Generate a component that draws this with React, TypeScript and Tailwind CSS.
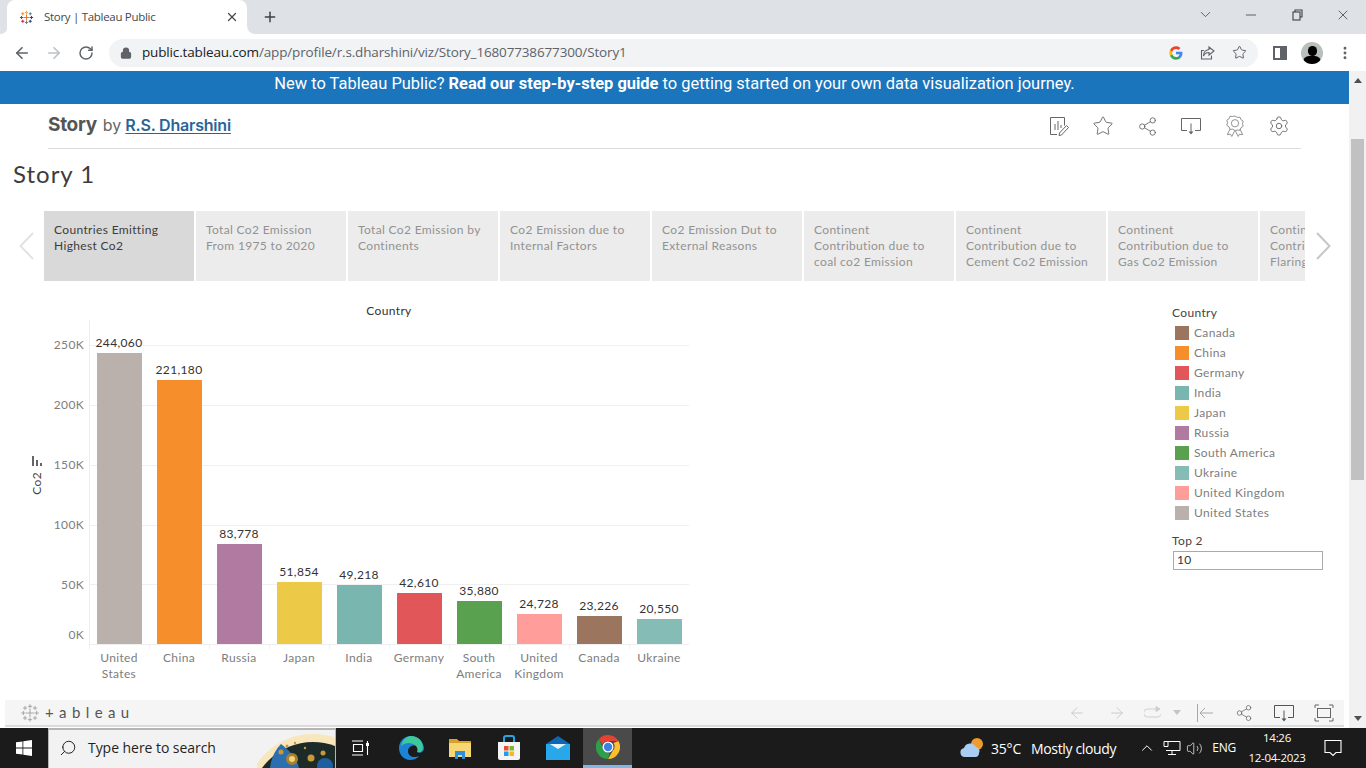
import {
  ArrowLeft,
  ArrowRight,
  ChevronDown,
  ChevronUp,
  Lock,
  Minus,
  MoreVertical,
  Plus,
  RotateCw,
  Search,
  Settings,
  Share2,
  Star,
  Volume2,
  X,
} from 'lucide-react';

const stories = [
  ['Countries Emitting', 'Highest Co2'],
  ['Total Co2 Emission', 'From 1975 to 2020'],
  ['Total Co2 Emission by', 'Continents'],
  ['Co2 Emission due to', 'Internal Factors'],
  ['Co2 Emission Dut to', 'External Reasons'],
  ['Continent', 'Contribution due to', 'coal co2 Emission'],
  ['Continent', 'Contribution due to', 'Cement Co2 Emission'],
  ['Continent', 'Contribution due to', 'Gas Co2 Emission'],
];

const bars = [
  { name: ['United', 'States'], label: '244,060', height: 291, color: 'bg-[#bab0ac]' },
  { name: ['China'], label: '221,180', height: 264, color: 'bg-[#f58e2b]' },
  { name: ['Russia'], label: '83,778', height: 100, color: 'bg-[#b07aa1]' },
  { name: ['Japan'], label: '51,854', height: 62, color: 'bg-[#edc948]' },
  { name: ['India'], label: '49,218', height: 59, color: 'bg-[#79b6b0]' },
  { name: ['Germany'], label: '42,610', height: 51, color: 'bg-[#e15759]' },
  { name: ['South', 'America'], label: '35,880', height: 43, color: 'bg-[#59a14f]' },
  { name: ['United', 'Kingdom'], label: '24,728', height: 30, color: 'bg-[#ff9d9a]' },
  { name: ['Canada'], label: '23,226', height: 28, color: 'bg-[#9c755f]' },
  { name: ['Ukraine'], label: '20,550', height: 25, color: 'bg-[#86bcb6]' },
];

const legend = [
  ['Canada', 'bg-[#9c755f]'],
  ['China', 'bg-[#f58e2b]'],
  ['Germany', 'bg-[#e15759]'],
  ['India', 'bg-[#79b6b0]'],
  ['Japan', 'bg-[#edc948]'],
  ['Russia', 'bg-[#b07aa1]'],
  ['South America', 'bg-[#59a14f]'],
  ['Ukraine', 'bg-[#86bcb6]'],
  ['United Kingdom', 'bg-[#ff9d9a]'],
  ['United States', 'bg-[#bab0ac]'],
];

function TableauMark({ size, mono }: { size: number; mono?: boolean }) {
  const crosses = [
    { x: 12, y: 12, r: 5, c: '#e8762c' },
    { x: 12, y: 4, r: 2.5, c: '#f2a93b' },
    { x: 12, y: 20, r: 2.5, c: '#5b879b' },
    { x: 4, y: 12, r: 2.5, c: '#c72035' },
    { x: 20, y: 12, r: 2.5, c: '#1f447e' },
    { x: 6, y: 6, r: 2.5, c: '#eb912b' },
    { x: 18, y: 6, r: 2.5, c: '#5b879b' },
    { x: 6, y: 18, r: 2.5, c: '#c72035' },
    { x: 18, y: 18, r: 2.5, c: '#1f447e' },
  ];
  return (
    <svg width={size} height={size} viewBox="0 0 24 24" fill="none">
      {crosses.map((p, i) => (
        <path
          key={i}
          d={`M${p.x - p.r} ${p.y}H${p.x + p.r}M${p.x} ${p.y - p.r}V${p.y + p.r}`}
          stroke={mono ? '#9a9a9a' : p.c}
          strokeWidth={mono ? 1 : 1.6}
        />
      ))}
    </svg>
  );
}

function GoogleG() {
  return (
    <svg width="14" height="14" viewBox="0 0 48 48">
      <path fill="#4285F4" d="M46 24.5c0-1.6-.1-3.100-.4-4.500H24v8.500h12.400c-.5 2.800-2.100 5.200-4.500 6.800v5.600h7.300C43.500 37 46 31.300 46 24.500z" />
      <path fill="#34A853" d="M24 47c6.100 0 11.300-2 15.100-5.500l-7.300-5.600c-2 1.400-4.600 2.200-7.800 2.200-6 0-11-4-12.800-9.500H3.700v5.800C7.500 42 15.200 47 24 47z" />
      <path fill="#FBBC05" d="M11.200 28.600c-.5-1.400-.7-3-.7-4.600s.3-3.200.7-4.600v-5.800H3.700C2.200 16.600 1 20.200 1 24s1.200 7.400 2.700 10.400l7.500-5.800z" />
      <path fill="#EA4335" d="M24 10.100c3.400 0 6.400 1.200 8.800 3.400l6.500-6.500C35.300 3.300 30.100 1 24 1 15.200 1 7.500 6 3.700 13.600l7.500 5.800C13 13.900 18 10.100 24 10.100z" />
    </svg>
  );
}

function DownloadBox({ color }: { color: string }) {
  return (
    <svg width="22" height="20" viewBox="0 0 22 20" fill="none" stroke={color} strokeWidth="1">
      <path d="M7 14.500H1.500v-12h19v12H15" />
      <path d="M11 7.500v9" />
      <path d="M8.500 15.500h5L11 18.500z" fill={color} stroke="none" />
    </svg>
  );
}

function EditChart() {
  return (
    <svg width="22" height="22" viewBox="0 0 22 22" fill="none" stroke="#666" strokeWidth="1">
      <path d="M9 19.500H2.500v-17h14v8" />
      <path d="M7 15V9M10 15V6M13 13V10" />
      <path d="M11.500 18l7-7.500 2 2-7 7.500-2.500.5z" />
    </svg>
  );
}

function Rosette() {
  return (
    <svg width="20" height="22" viewBox="0 0 22 24" fill="none" stroke="#888" strokeWidth="1">
      <path d="M11 1l2.500 1.500 3-.2 1 2.700 2.500 1.700-.8 2.800.8 2.800-2.500 1.700-1 2.700-3-.2L11 17l-2.500-1.500-3 .2-1-2.700L2 11.300l.8-2.800L2 5.700 4.500 4l1-2.700 3 .2z" />
      <circle cx="11" cy="9" r="4" />
      <path d="M5.500 15.500L2.500 21.500l3.500-.5 1.500 2.500 3-6M16.500 15.500l3 6-3.500-.5-1.500 2.500-3-6" />
    </svg>
  );
}

function Header() {
  const box = 'w-11 flex justify-center';
  return (
    <div className="mx-12 h-[45px] flex items-center border-b border-[#dcdcdc] font-['Inter',sans-serif]">
      <div className="flex items-center pb-[2px]">
        <span className="text-[19px] font-bold text-[#555] tracking-[-0.3px]">Story</span>
        <span className="ml-[6px] text-[16px] text-[#666]">by</span>
        <span className="ml-[4px] text-[16px] font-semibold text-[#2a6496] underline underline-offset-2 tracking-[-0.2px]">
          R.S. Dharshini
        </span>
      </div>
      <div className="ml-auto flex items-center text-[#666]">
        <div className={box}><EditChart /></div>
        <div className={box}><Star size={22} strokeWidth={1} /></div>
        <div className={box}><Share2 size={21} strokeWidth={1} /></div>
        <div className={box}><DownloadBox color="#666" /></div>
        <div className={box}><Rosette /></div>
        <div className={box}><Settings size={22} strokeWidth={1} /></div>
      </div>
    </div>
  );
}

function StoryTabs() {
  return (
    <div className="h-[70px] flex items-center">
      <div className="w-11 shrink-0 pl-[19px]">
        <svg width="15" height="28" viewBox="0 0 15 28" fill="none" stroke="#e2e2e2" strokeWidth="2">
          <path d="M14 1L1.500 14 14 27" />
        </svg>
      </div>
      <div className="w-[1261px] h-full flex gap-[2px] overflow-hidden shrink-0">
        {stories.map((lines, i) => (
          <div
            key={i}
            className={`w-[150px] shrink-0 pl-[10px] pt-[11px] text-[12px] leading-[16px] ${
              i === 0 ? 'bg-[#d9d9d9] text-[#3c3c3c]' : 'bg-[#ececec] text-[#929292]'
            }`}
          >
            {lines.map((l) => (
              <div key={l} className="whitespace-nowrap">{l}</div>
            ))}
          </div>
        ))}
        <div className="w-[150px] shrink-0 pl-[10px] pt-[11px] text-[12px] leading-[16px] bg-[#ececec] text-[#929292]">
          <div>Continent</div>
          <div>Contribution due to</div>
          <div>Flaring Co2 Emission</div>
        </div>
      </div>
      <svg width="15" height="28" viewBox="0 0 15 28" fill="none" stroke="#c6c6c6" strokeWidth="2" className="ml-[11px]">
        <path d="M1 1l12.500 13L1 27" />
      </svg>
    </div>
  );
}

function Chart() {
  return (
    <div className="w-[700px] shrink-0">
      <div className="h-[39px] pt-[22px] pl-[89px] w-[689px] text-center text-[12px] leading-[16px] text-[#333]">
        Country
      </div>
      <div className="flex">
        <div className="w-[30px] shrink-0 pl-[30px]">
          <div className="mt-[136px] flex flex-col items-center w-[14px]">
            <svg width="12" height="10" viewBox="0 0 12 10" fill="#666" className="mb-[6px]">
              <rect x="1" y="0" width="2" height="10" />
              <rect x="5" y="4" width="2" height="6" />
              <rect x="9" y="7" width="2" height="3" />
            </svg>
            <span className="[writing-mode:vertical-rl] rotate-180 text-[12px] leading-[14px] text-[#444]">Co2</span>
          </div>
        </div>
        <div className="w-[55px] shrink-0 flex flex-col items-end text-[12px] leading-[16px] text-[#7d7d7d] pr-px">
          <span className="mt-[17px] h-[60px]">250K</span>
          <span className="h-[60px]">200K</span>
          <span className="h-[60px]">150K</span>
          <span className="h-[60px]">100K</span>
          <span className="h-[50px]">50K</span>
          <span>0K</span>
        </div>
        <div className="ml-[4px] w-[600px] shrink-0">
          <div className="relative h-[325px] border-l border-b border-[#efefef]">
            {[25, 85, 145, 205, 264].map((top) => (
              <div key={top} className="absolute left-0 right-0 h-px bg-[#f0f0f0]" style={{ top }} />
            ))}
            <div className="relative h-full -ml-px flex items-end">
              {bars.map((b) => (
                <div key={b.label} className="w-[60px] shrink-0 flex flex-col items-center">
                  <span className="mb-[2px] text-[12px] leading-[16px] text-[#333]">{b.label}</span>
                  <div className={`w-[45px] ${b.color}`} style={{ height: b.height }} />
                </div>
              ))}
            </div>
          </div>
          <div className="flex">
            {bars.map((b) => (
              <div key={b.label} className="w-[60px] shrink-0">
                <div className="h-[4px] border-l border-[#efefef]" />
                <div className="pt-px text-center text-[12px] leading-[16px] text-[#7d7d7d]">
                  {b.name.map((n) => (
                    <div key={n}>{n}</div>
                  ))}
                </div>
              </div>
            ))}
          </div>
        </div>
      </div>
    </div>
  );
}

function Legend() {
  return (
    <div className="ml-[472px] w-[151px] pt-[24px] text-[12px]">
      <div className="leading-[16px] text-[#444] h-[18px]">Country</div>
      {legend.map(([name, color]) => (
        <div key={name} className="h-[20px] flex items-center pl-[3px] text-[#7d7d7d]">
          <span className={`w-[14px] h-[14px] ${color}`} />
          <span className="ml-[5px]">{name}</span>
        </div>
      ))}
      <div className="mt-[10px] leading-[16px] text-[#444]">Top 2</div>
      <div className="mt-[2px] ml-px h-[19px] border border-[#aaaaaa] pl-[3px] leading-[16px] text-[#333]">10</div>
    </div>
  );
}

function VizFooter() {
  return (
    <div className="mx-[5px] h-[27px] bg-[#f5f5f5] border-b-2 border-[#dcdcdc] flex items-center">
      <div className="ml-[15px]">
        <TableauMark size={20} mono />
      </div>
      <span className="ml-[5px] text-[15px] leading-none text-[#555] tracking-[0.36em]">+ableau</span>
      <div className="ml-auto flex items-center pr-[10px] text-[#bdbdbd]">
        <ArrowLeft size={18} strokeWidth={1} />
        <ArrowRight size={18} strokeWidth={1} className="ml-[22px]" />
        <svg width="20" height="16" viewBox="0 0 20 16" fill="none" stroke="#cfcfcf" strokeWidth="1" className="ml-[18px]">
          <path d="M12 4H3.500a2.500 2.500 0 0 0 0 8H14a2.500 2.500 0 0 0 2.500-2.500" />
          <path d="M12 1.500l4 2.500-4 2.500z" fill="#cfcfcf" />
        </svg>
        <svg width="8" height="5" viewBox="0 0 8 5" fill="#c4c4c4" className="ml-[9px]">
          <path d="M0 0h8L4 5z" />
        </svg>
        <svg width="18" height="18" viewBox="0 0 18 18" fill="none" stroke="#a8a8a8" strokeWidth="1" className="ml-[15px]">
          <path d="M1.500 0v18M17 9H4M9 4L4 9l5 5" />
        </svg>
        <Share2 size={18} strokeWidth={1} className="ml-[21px] text-[#666]" />
        <div className="ml-[20px]">
          <DownloadBox color="#555" />
        </div>
        <svg width="20" height="18" viewBox="0 0 20 18" fill="none" stroke="#666" strokeWidth="1" className="ml-[19px]">
          <path d="M1 4V1h4M15 1h4v3M19 14v3h-4M5 17H1v-3" />
          <rect x="3.500" y="4.500" width="13" height="9" />
        </svg>
      </div>
    </div>
  );
}

function Scrollbar() {
  return (
    <div className="w-[17px] shrink-0 bg-[#f1f1f1] flex flex-col items-center">
      <svg width="8" height="5" viewBox="0 0 8 5" fill="#505050" className="mt-[7px]">
        <path d="M0 5h8L4 0z" />
      </svg>
      <div className="mt-[56px] w-[13px] h-[341px] bg-[#c1c1c1]" />
      <svg width="8" height="5" viewBox="0 0 8 5" fill="#505050" className="mt-auto mb-[7px]">
        <path d="M0 0h8L4 5z" />
      </svg>
    </div>
  );
}

function BrowserChrome() {
  const winBtn = 'w-[46px] flex justify-center';
  return (
    <div className="font-['Open_Sans',sans-serif]">
      <div className="h-[34px] bg-[#dee1e6] flex items-end text-[#3c4043]">
        <div className="w-2 h-2 bg-white">
          <div className="w-2 h-2 bg-[#dee1e6] rounded-br-lg" />
        </div>
        <div className="w-[240px] h-[34px] bg-white rounded-t-lg flex items-center -ml-px pl-[12px] shrink-0">
          <TableauMark size={15} />
          <span className="ml-[10px] text-[11.500px] tracking-[-0.3px] text-[#45484c]">Story | Tableau Public</span>
          <X size={14} strokeWidth={2.2} className="ml-auto mr-[8px] text-[#45484c]" />
        </div>
        <div className="w-2 h-2 bg-white">
          <div className="w-2 h-2 bg-[#dee1e6] rounded-bl-lg" />
        </div>
        <Plus size={16} strokeWidth={2.2} className="ml-[7px] mb-[9px]" />
        <div className="ml-auto h-full flex items-center pb-[5px]">
          <div className={winBtn}><ChevronDown size={17} strokeWidth={1.1} /></div>
          <div className={winBtn}><Minus size={16} strokeWidth={1.2} /></div>
          <div className={winBtn}>
            <svg width="11" height="12" viewBox="0 0 11 12" fill="none" stroke="#3c4043" strokeWidth="1.100">
              <path d="M3 3V1h7v7H8" />
              <rect x="1" y="3" width="7" height="8" />
            </svg>
          </div>
          <div className={winBtn}><X size={16} strokeWidth={1.2} /></div>
        </div>
      </div>
      <div className="h-[37px] bg-white flex items-center text-[#5f6368]">
        <ArrowLeft size={18} strokeWidth={2.2} className="ml-[13px]" />
        <ArrowRight size={18} strokeWidth={2.2} className="ml-[14px] text-[#bdc1c6]" />
        <RotateCw size={16} strokeWidth={2.2} className="ml-[15px]" />
        <div className="ml-[15px] w-[1149px] h-7 rounded-full bg-[#f1f3f4] flex items-center pl-[11px] pr-[11px]">
          <Lock size={12} strokeWidth={2.5} fill="#5f6368" />
          <span className="ml-[10px] text-[13.500px] text-[#202124] tracking-[-0.15px]">
            public.tableau.com<span className="text-[#5f6368]">/app/profile/r.s.dharshini/viz/Story_16807738677300/Story1</span>
          </span>
          <div className="ml-auto flex items-center gap-4">
            <div className="mr-[1px]"><GoogleG /></div>
            <svg width="16" height="16" viewBox="0 0 16 16" fill="none" stroke="#5f6368" strokeWidth="1.100">
              <path d="M9 2l5 4-5 4V7.500C6 7.500 4.500 8.500 3.500 11c0-4 2-6 5.500-6.500z" />
              <path d="M11.500 10.500V14H1.500V5.500H4" />
            </svg>
            <Star size={15} strokeWidth={1.6} className="text-[#5f6368]" />
          </div>
        </div>
        <div className="ml-[15px] w-[14px] h-[14px] border-2 border-[#5f6368] flex justify-end">
          <div className="w-[5px] bg-[#5f6368]" />
        </div>
        <div className="ml-[14px] w-[22px] h-[22px] rounded-full overflow-hidden bg-[#b9bfbb] flex flex-col items-center justify-end">
          <div className="w-[9px] h-[10px] rounded-full bg-black" />
          <div className="w-[18px] h-[8px] rounded-t-md bg-black" />
        </div>
        <MoreVertical size={16} strokeWidth={2.4} className="ml-[14px]" />
      </div>
    </div>
  );
}

function Taskbar() {
  return (
    <div className="h-10 bg-[#1b1b1b] flex items-center text-white font-['Open_Sans',sans-serif] shrink-0">
      <div className="w-12 flex justify-center">
        <svg width="16" height="16" viewBox="0 0 16 16" fill="#fff">
          <path d="M0 2.300l6.500-.9v6.200H0zM7.300 1.300L16 0v7.600H7.300zM0 8.400h6.500v6.200L0 13.700zM7.300 8.400H16V16l-8.700-1.200z" />
        </svg>
      </div>
      <div className="w-[288px] h-full bg-[#f2f2f2] border-t-2 border-x border-[#b5b5b5] flex items-center text-[#1f1f1f] overflow-hidden">
        <Search size={18} strokeWidth={1.3} className="ml-[10px] -scale-x-100 mb-[2px]" />
        <span className="ml-[11px] mb-[3px] text-[14px] tracking-[-0.05px]">Type here to search</span>
        <svg width="78" height="38" viewBox="0 0 78 38" className="ml-auto shrink-0">
          <circle cx="56" cy="72" r="68" fill="#f8e6bd" />
          <circle cx="56" cy="75" r="63" fill="#1d2b28" />
          <path d="M13 38C14 28 18 20 24 14c8 6 16 14 18 24z" fill="#2c6fb0" />
          <circle cx="35" cy="29" r="6" fill="#a87f2e" />
          <circle cx="35" cy="29" r="3" fill="#f0d27a" />
          <circle cx="54" cy="28" r="3.500" fill="#c8993a" />
          <circle cx="66" cy="23" r="2.500" fill="#c8993a" />
          <circle cx="24" cy="22" r="2.500" fill="#c8993a" />
          <circle cx="30" cy="16" r="1.500" fill="#c8993a" />
          <circle cx="38" cy="13" r="1.200" fill="#c8993a" />
          <circle cx="48" cy="18" r="1.200" fill="#c8993a" />
          <circle cx="68" cy="36" r="8" fill="#1d5fa0" />
        </svg>
      </div>
      <svg width="18" height="16" viewBox="0 0 18 16" fill="none" stroke="#fff" strokeWidth="1.100" className="ml-[16px]">
        <path d="M0 1h11M0 15h11M1.500 4.500h9v7h-9zM15.500 1v2M15.500 6v9" />
        <rect x="14" y="3" width="3" height="3" fill="#fff" stroke="none" />
      </svg>
      <svg width="26" height="26" viewBox="0 0 26 26" className="ml-[28px]">
        <path d="M13 1C6 1 1 6.500 1 13c0 7 5 12 11 12 4 0 7-1.500 9-4-5 2.500-11 .5-11-5 0-3 2.500-5.500 6-5.500 3 0 5 2 5 4.500 0 1-.5 2-1 2.500 3 1 6-1 6-4.500C25 6 20 1 13 1z" fill="#1b84d4" />
        <path d="M13 1c7 0 12 5 12 11.500 0 3.500-3 5.500-6 4.500 1-2 .5-4.500-1.500-6.500C14 7 7 7 3 11 4.500 5 8.500 1 13 1z" fill="#3fc99a" />
      </svg>
      <svg width="22" height="22" viewBox="0 0 22 22" className="ml-[25px]">
        <path d="M0 2h8l2 2h12v16H0z" fill="#d8a22a" />
        <path d="M0 6h22v14H0z" fill="#f7d774" />
        <path d="M6 14h10v8h-3v-4H9v4H6z" fill="#2f8fd8" />
      </svg>
      <svg width="24" height="26" viewBox="0 0 24 26" className="ml-[26px]">
        <path d="M7 7V3a2 2 0 0 1 2-2h6a2 2 0 0 1 2 2v4" fill="none" stroke="#27a5e0" strokeWidth="2" />
        <path d="M1 7h22v16a2 2 0 0 1-2 2H3a2 2 0 0 1-2-2z" fill="#f4f4f4" />
        <rect x="7" y="11" width="4.500" height="4.500" fill="#ea4f2d" />
        <rect x="12.500" y="11" width="4.500" height="4.500" fill="#7cb82f" />
        <rect x="7" y="16.500" width="4.500" height="4.500" fill="#18a1e8" />
        <rect x="12.500" y="16.500" width="4.500" height="4.500" fill="#fcb913" />
      </svg>
      <svg width="26" height="24" viewBox="0 0 26 24" className="ml-[24px]">
        <path d="M13 0l12 8v16H1V8z" fill="#0f66b3" />
        <path d="M1 8h24v16H1z" fill="#28a8ea" />
        <path d="M5 8h16l-8 5z" fill="#e8f4fb" />
      </svg>
      <div className="ml-[12px] w-[49px] h-full bg-[#4a4a4a] border-b-[3px] border-[#7db8e8] flex items-center justify-center">
        <svg width="24" height="24" viewBox="0 0 24 24">
          <path d="M12 0a12 12 0 0 1 10.400 6H12a6 6 0 0 0-5.600 3.800L2.900 4A12 12 0 0 1 12 0z" fill="#e34234" />
          <path d="M22.400 6A12 12 0 0 1 12 24l4.900-8.600A6 6 0 0 0 17.500 8z" fill="#fbc02d" />
          <path d="M12 24A12 12 0 0 1 2.900 4l4 8.500a6 6 0 0 0 6.800 5.300z" fill="#2e9e48" />
          <circle cx="12" cy="12" r="5.500" fill="#fff" />
          <circle cx="12" cy="12" r="4.200" fill="#3f7fe8" />
        </svg>
      </div>
      <div className="ml-auto flex items-center">
        <svg width="26" height="24" viewBox="0 0 26 24">
          <circle cx="18" cy="8" r="6" fill="#ef9a2c" />
          <path d="M6 21a4.500 4.500 0 0 1-1-8.900A6.500 6.500 0 0 1 17 11a4 4 0 0 1 3 6 4 4 0 0 1-3 4z" fill="#a9cdf2" />
        </svg>
        <span className="ml-[6px] text-[14px] tracking-[-0.2px]">35°C</span>
        <span className="ml-[10px] text-[14px] tracking-[-0.35px]">Mostly cloudy</span>
        <ChevronUp size={18} strokeWidth={1.3} className="ml-[22px]" />
        <svg width="18" height="18" viewBox="0 0 18 18" fill="none" stroke="#fff" strokeWidth="1" className="ml-[7px]">
          <path d="M5 2.500h12v9H3M9 11.500v4M5 15.500h8M1 2.500h4v5H1z" />
        </svg>
        <Volume2 size={17} strokeWidth={1} className="ml-[5px]" />
        <span className="ml-[9px] text-[12px] tracking-[-0.2px]">ENG</span>
        <div className="ml-[9px] w-[64px] flex flex-col items-center text-[11.500px] leading-[20px] tracking-[-0.3px]">
          <span>14:26</span>
          <span className="whitespace-nowrap">12-04-2023</span>
        </div>
        <svg width="18" height="18" viewBox="0 0 18 18" fill="none" stroke="#fff" strokeWidth="1.100" className="ml-[15px] mr-[24px]">
          <path d="M1 1.500h16v12h-5L9 16.500l-3-3H1z" />
        </svg>
      </div>
    </div>
  );
}

export default function App() {
  return (
    <div className="w-[1366px] h-[768px] flex flex-col overflow-hidden bg-white">
      <BrowserChrome />
      <div className="flex-1 min-h-0 flex">
        <div className="w-[1349px] shrink-0 flex flex-col">
          <div className="h-[33px] pb-[7px] bg-[#1b75bc] flex items-center justify-center text-[16.450px] text-white font-['Roboto',sans-serif]">
            <span>
              New to Tableau Public? <b>Read our step-by-step guide</b> to getting started on your own data visualization journey.
            </span>
          </div>
          <Header />
          <div className="flex-1 min-h-0 flex flex-col font-['Lato',sans-serif] tracking-[0.35px]">
            <div className="h-[62px] pl-[13px] pt-[7px] text-[24px] leading-[36px] tracking-[1px] text-[#3c3c3c]">Story 1</div>
            <StoryTabs />
            <div className="flex-1 min-h-0 flex">
              <Chart />
              <Legend />
            </div>
            <VizFooter />
            <div className="h-px" />
          </div>
        </div>
        <Scrollbar />
      </div>
      <Taskbar />
    </div>
  );
}
